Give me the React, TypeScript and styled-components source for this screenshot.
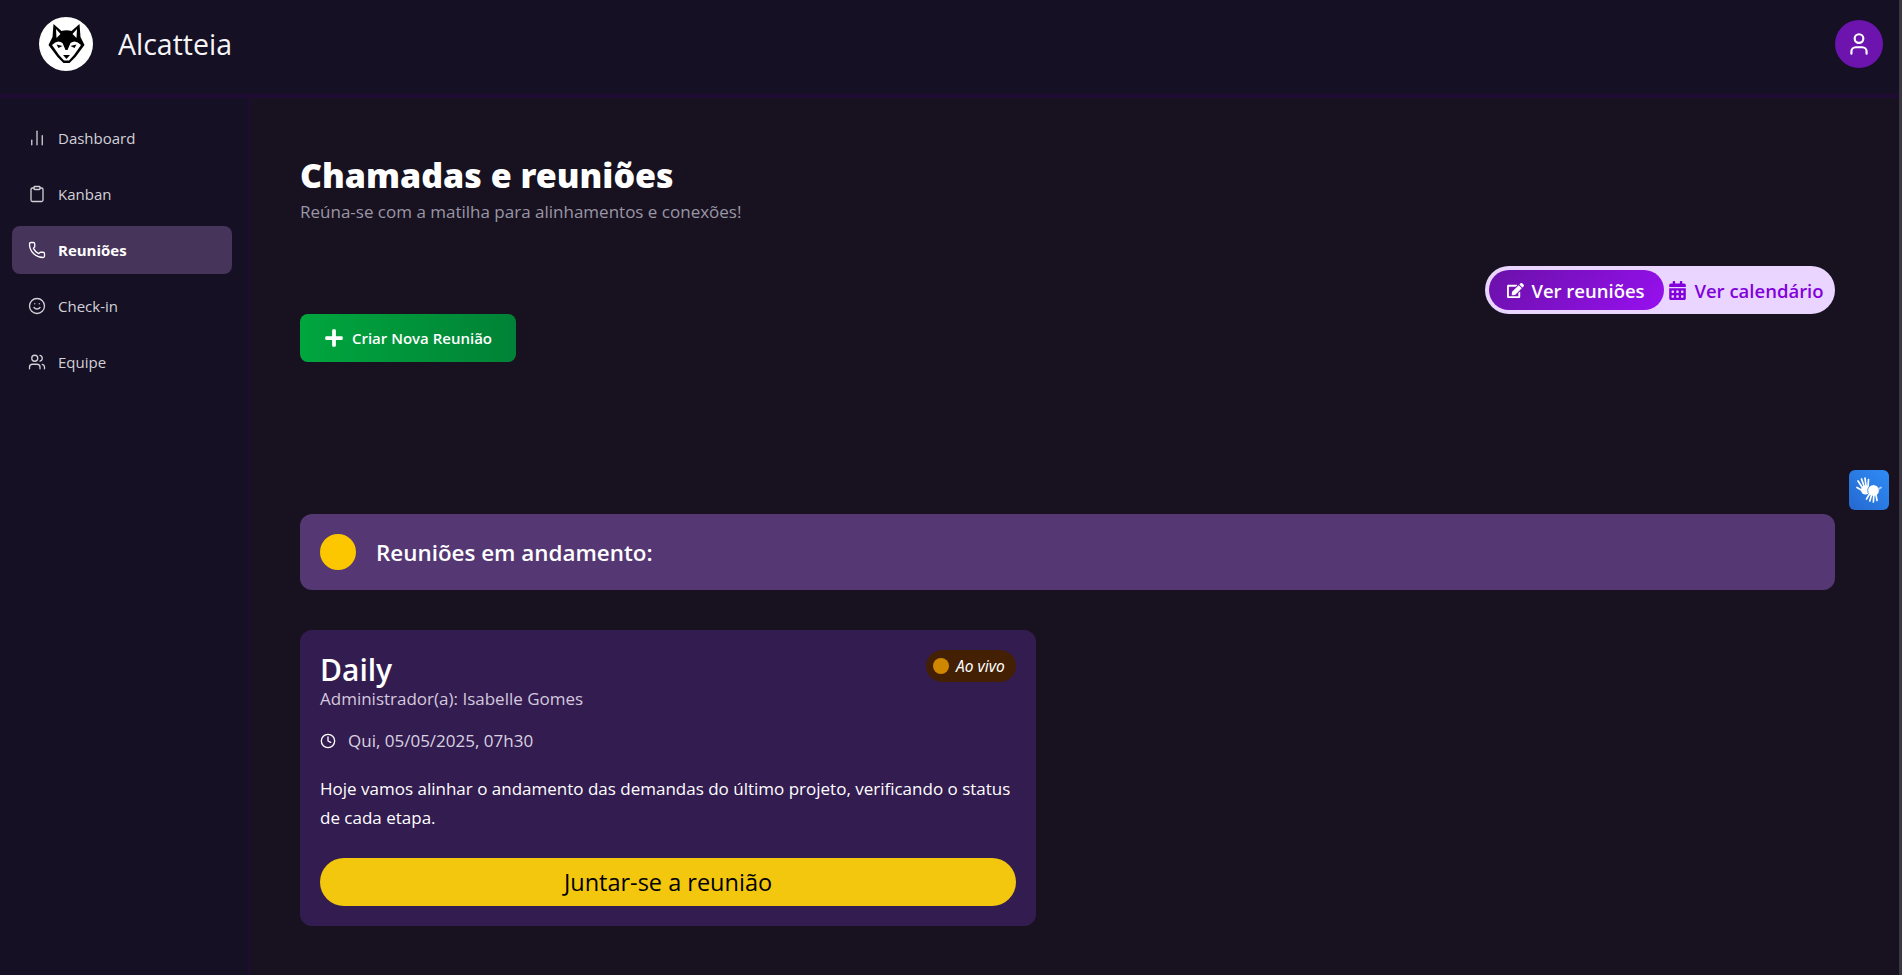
import styled, { createGlobalStyle } from "styled-components";
import { ChartNoAxesColumn, Clipboard, Phone, Smile, Users, User, Clock } from "lucide-react";
import { FaCalendarAlt, FaEdit, FaPlus } from "react-icons/fa";

const GlobalStyle = createGlobalStyle`
  html, body {
    margin: 0;
    height: 100%;
    overflow: hidden;
    background: #181220;
  }
  * {
    box-sizing: border-box;
  }
  body {
    font-family: "Open Sans", "Noto Sans", sans-serif;
  }
`;

const Page = styled.div`
  height: 975px;
  display: flex;
  flex-direction: column;
  color: #fff;
  border-right: 3px solid #3a3740;
`;

const Header = styled.header`
  height: 98px;
  flex: none;
  display: flex;
  align-items: center;
  justify-content: space-between;
  padding: 0 16px 6px 39px;
  background: #151023;
  border-bottom: 4px solid #1f0b34;
`;

const Brand = styled.div`
  display: flex;
  align-items: center;
  gap: 25px;
`;

const LogoCircle = styled.div`
  width: 54px;
  height: 54px;
  border-radius: 50%;
  background: #fff;
  display: flex;
  align-items: center;
  justify-content: center;
`;

const BrandName = styled.span`
  font-size: 28.5px;
  color: #f5f4f7;
`;

const Avatar = styled.div`
  width: 48px;
  height: 48px;
  border-radius: 50%;
  background: #6c14ad;
  display: flex;
  align-items: center;
  justify-content: center;
`;

const Body = styled.div`
  flex: 1;
  display: flex;
  min-height: 0;
`;

const Sidebar = styled.nav`
  width: 250px;
  flex: none;
  display: flex;
  flex-direction: column;
  gap: 8px;
  padding: 16px 16px 0 12px;
  background: #151023;
  border-right: 2px solid #1f0b34;
`;

const NavItem = styled.a<{ $active?: boolean }>`
  height: 48px;
  display: flex;
  align-items: center;
  gap: 12px;
  padding-left: 16px;
  border-radius: 8px;
  font-size: 15px;
  font-weight: ${(p) => (p.$active ? 700 : 400)};
  color: ${(p) => (p.$active ? "#ffffff" : "#d2d0d8")};
  background: ${(p) => (p.$active ? "#47345a" : "transparent")};
`;

const Main = styled.main`
  flex: 1;
  padding: 57px 64px 0 50px;
`;

const Title = styled.h1`
  margin: 0;
  font-family: "Noto Sans", "Open Sans", sans-serif;
  font-size: 34px;
  line-height: 40px;
  font-weight: 900;
  color: #fff;
`;

const Subtitle = styled.p`
  margin: 5px 0 0;
  font-size: 17px;
  line-height: 24px;
  color: #9a96a6;
`;

const ToggleRow = styled.div`
  display: flex;
  justify-content: flex-end;
  margin-top: 42px;
`;

const Toggle = styled.div`
  width: 350px;
  height: 48px;
  display: flex;
  align-items: center;
  padding: 4px;
  border-radius: 24px;
  background: #e9d5ff;
`;

const ToggleOption = styled.button<{ $active?: boolean }>`
  height: 40px;
  border: 0;
  display: flex;
  align-items: center;
  justify-content: center;
  gap: 7px;
  font: inherit;
  font-size: 18.5px;
  font-weight: 600;
  border-radius: 20px;
  padding: ${(p) => (p.$active ? "0 1px 0 0" : "0 3px 0 0")};
  flex: ${(p) => (p.$active ? "0 0 175px" : "1")};
  color: ${(p) => (p.$active ? "#fff" : "#8200db")};
  background: ${(p) => (p.$active ? "linear-gradient(135deg, #6a11a8, #9810f0)" : "transparent")};
`;

const CreateButton = styled.button`
  width: 216px;
  height: 48px;
  display: flex;
  align-items: center;
  justify-content: center;
  gap: 8px;
  border: 0;
  border-radius: 8px;
  font: inherit;
  font-size: 15px;
  font-weight: 600;
  color: #fff;
  background: linear-gradient(90deg, #00a63e, #008236);
`;

const Banner = styled.div`
  height: 76px;
  margin-top: 152px;
  display: flex;
  align-items: center;
  gap: 20px;
  padding-left: 20px;
  border-radius: 12px;
  background: #553774;
`;

const BannerDot = styled.span`
  width: 36px;
  height: 36px;
  border-radius: 50%;
  background: #fdc700;
`;

const BannerText = styled.h2`
  margin: 0;
  font-size: 22.4px;
  font-weight: 600;
  color: #fff;
`;

const Card = styled.article`
  width: 736px;
  height: 296px;
  margin-top: 40px;
  padding: 20px;
  border-radius: 12px;
  background: #331c50;
  display: flex;
  flex-direction: column;
`;

const CardTop = styled.div`
  display: flex;
  justify-content: space-between;
  align-items: flex-start;
`;

const CardTitle = styled.h3`
  margin: 0;
  font-size: 30px;
  line-height: 40px;
  font-weight: 600;
`;

const LiveBadge = styled.span`
  width: 90px;
  height: 32px;
  display: flex;
  align-items: center;
  gap: 7px;
  padding-left: 7px;
  border-radius: 16px;
  background: #432004;
  font-family: "Noto Sans", sans-serif;
  font-size: 15.5px;
  font-style: italic;
  font-weight: 400;
`;

const LiveDot = styled.span`
  width: 16px;
  height: 16px;
  border-radius: 50%;
  background: #d08700;
`;

const Admin = styled.p`
  margin: -3px 0 0;
  font-size: 17px;
  line-height: 24px;
  color: #d4c9de;
`;

const DateRow = styled.div`
  margin-top: 18px;
  display: flex;
  align-items: center;
  gap: 12px;
  font-size: 17px;
  line-height: 24px;
  color: #d9d2e0;
`;

const Description = styled.p`
  margin: 21px 0 0;
  font-size: 17px;
  line-height: 29px;
  color: #fff;
`;

const JoinButton = styled.button`
  height: 48px;
  margin-top: auto;
  border: 0;
  border-radius: 24px;
  background: #f4c70f;
  color: #000;
  font: inherit;
  font-size: 23.5px;
  font-weight: 500;
`;

const VLibras = styled.div`
  position: fixed;
  top: 470px;
  right: 13px;
  width: 40px;
  height: 40px;
  display: flex;
  align-items: center;
  justify-content: center;
  border-radius: 6px;
  background: linear-gradient(45deg, #2568d0, #2f8cf5);
`;

const WolfLogo = () => (
  <svg width="37" height="40" viewBox="0 0 36 40" aria-hidden="true">
    <path
      d="M5 0 L13 7 Q18 5.5 23 7 L31 0 L32 13 L36 21 L27 33 L21 39 L15 39 L9 33 L0 21 L4 13 Z"
      fill="#000"
    />
    <path d="M7.5 5 L12 10 L8 14 Z M28.5 5 L24 10 L28 14 Z" fill="#fff" />
    <path
      d="M3.5 21 Q9 15 14 19 L17 26 L19 26 L22 19 Q27 15 32.5 21 L25.5 31 L20.5 36.5 L15.5 36.5 L10.5 31 Z"
      fill="#fff"
    />
    <path d="M8 20.5 L14 22 L10 24 Z M28 20.5 L22 22 L26 24 Z" fill="#000" />
    <path d="M14.5 31 L21.5 31 L18 35 Z" fill="#000" />
  </svg>
);

// the VLibras mark: two open hands overlapping
const SignHands = () => (
  <svg width="28" height="28" viewBox="0 0 28 28" fill="none" aria-hidden="true">
    <g stroke="#fff" strokeWidth="1.7" strokeLinecap="round">
      <path d="M7 11 L3 5" />
      <path d="M9 10 L6.5 3" />
      <path d="M11 10 L10 2" />
      <path d="M13 10.5 L13.5 3.5" />
      <path d="M8 15 L2 11.5" />
    </g>
    <circle cx="10.5" cy="14" r="4.5" fill="#fff" />
    <circle cx="18.5" cy="14.5" r="5.8" fill="#fff" stroke="#2a7be4" strokeWidth="0.8" />
    <g stroke="#fff" strokeWidth="1.7" strokeLinecap="round">
      <path d="M14.5 18 L11.5 23" />
      <path d="M16.5 19 L14.8 25" />
      <path d="M18.8 19.5 L18.4 26" />
      <path d="M21 19 L22 24.5" />
    </g>
    <path d="M23.5 13 L26 11.5" stroke="#bcd8fb" strokeWidth="1.7" strokeLinecap="round" />
  </svg>
);

const navItems = [
  { label: "Dashboard", Icon: ChartNoAxesColumn },
  { label: "Kanban", Icon: Clipboard },
  { label: "Reuniões", Icon: Phone, active: true },
  { label: "Check-in", Icon: Smile },
  { label: "Equipe", Icon: Users },
];

const App = () => {
  return (
    <Page>
      <GlobalStyle />
      <Header>
        <Brand>
          <LogoCircle>
            <WolfLogo />
          </LogoCircle>
          <BrandName>Alcatteia</BrandName>
        </Brand>
        <Avatar>
          <User size={26} color="#fff" strokeWidth={2} />
        </Avatar>
      </Header>
      <Body>
        <Sidebar>
          {navItems.map(({ label, Icon, active }) => (
            <NavItem key={label} $active={active}>
              <Icon size={18} strokeWidth={1.75} />
              {label}
            </NavItem>
          ))}
        </Sidebar>
        <Main>
          <Title>Chamadas e reuniões</Title>
          <Subtitle>Reúna-se com a matilha para alinhamentos e conexões!</Subtitle>
          <ToggleRow>
            <Toggle>
              <ToggleOption $active>
                <FaEdit size={17} />
                Ver reuniões
              </ToggleOption>
              <ToggleOption>
                <FaCalendarAlt size={19} />
                Ver calendário
              </ToggleOption>
            </Toggle>
          </ToggleRow>
          <CreateButton>
            <FaPlus size={20} />
            Criar Nova Reunião
          </CreateButton>
          <Banner>
            <BannerDot />
            <BannerText>Reuniões em andamento:</BannerText>
          </Banner>
          <Card>
            <CardTop>
              <CardTitle>Daily</CardTitle>
              <LiveBadge>
                <LiveDot />
                Ao vivo
              </LiveBadge>
            </CardTop>
            <Admin>Administrador(a): Isabelle Gomes</Admin>
            <DateRow>
              <Clock size={16} color="#fff" />
              Qui, 05/05/2025, 07h30
            </DateRow>
            <Description>
              Hoje vamos alinhar o andamento das demandas do último projeto, verificando o status de
              cada etapa.
            </Description>
            <JoinButton>Juntar-se a reunião</JoinButton>
          </Card>
        </Main>
      </Body>
      <VLibras>
        <SignHands />
      </VLibras>
    </Page>
  );
};

export default App;
